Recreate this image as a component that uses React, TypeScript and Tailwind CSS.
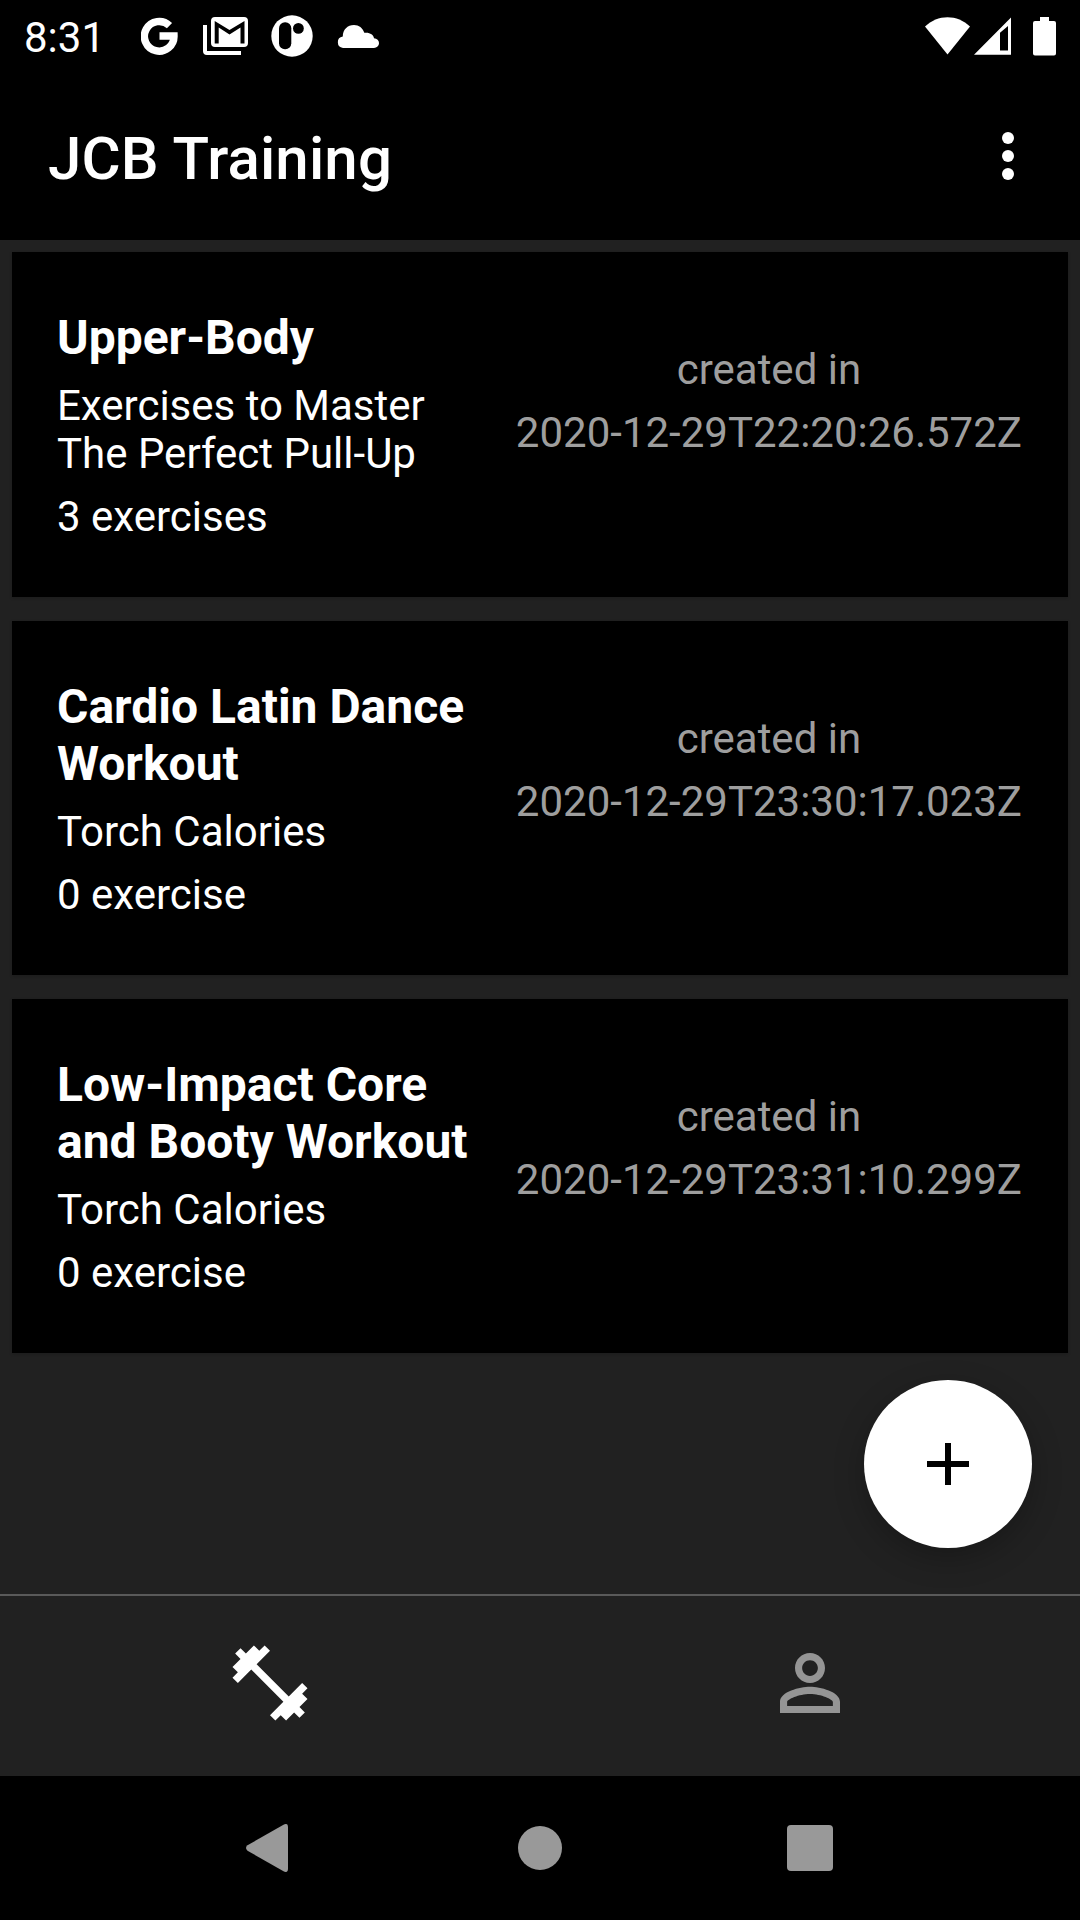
interface Workout {
  id: number;
  title: string;
  description: string;
  exercises: number;
  createdAt: string;
}

const workouts: Workout[] = [
  { id: 1, title: 'Upper-Body', description: 'Exercises to Master The Perfect Pull-Up', exercises: 3, createdAt: '2020-12-29T22:20:26.572Z' },
  { id: 2, title: 'Cardio Latin Dance Workout', description: 'Torch Calories', exercises: 0, createdAt: '2020-12-29T23:30:17.023Z' },
  { id: 3, title: 'Low-Impact Core and Booty Workout', description: 'Torch Calories', exercises: 0, createdAt: '2020-12-29T23:31:10.299Z' },
];

function StatusBar() {
  return (
    <div className="flex h-[72px] items-center justify-between px-6">
      <div className="flex items-center">
        <span className="w-[117px] pt-[3px] text-[42px] leading-[69px]">8:31</span>
        <svg className="h-[38px] w-[37px]" viewBox="0 0 37 38">
          <path d="M28.5 8.700A14.800 14.800 0 1 0 33 19H18.500" fill="none" stroke="white" strokeWidth="7.400" />
        </svg>
        <svg className="ml-[25px] h-[38px] w-[45px]" viewBox="0 0 45 38">
          <path d="M0 8h4v26h34v4H4a4 4 0 0 1-4-4z" fill="white" />
          <path
            fillRule="evenodd"
            fill="white"
            d="M12 0h29a4 4 0 0 1 4 4v22a4 4 0 0 1-4 4H12a4 4 0 0 1-4-4V4a4 4 0 0 1 4-4zM11.700 4v22.500h4V10.500L26.500 17.500 37.500 10.500V26.500h4V4L26.500 13z"
          />
        </svg>
        <svg className="ml-[23px] h-[42px] w-[42px]" viewBox="0 0 42 42">
          <circle cx="21" cy="21" r="20.700" fill="white" />
          <rect x="8" y="7.300" width="12.300" height="27" rx="6" fill="black" />
          <circle cx="27.400" cy="13.400" r="5.400" fill="black" />
        </svg>
        <svg className="ml-6 h-[23px] w-[42px]" viewBox="0 0 42 23">
          <path d="M6 23a5.800 5.800 0 0 1-.2-11.500C5.800 4.500 10.500 0 17 0c5 0 8.700 3 10.300 7.800 5-.8 9.200 1.600 9.700 5.400 3 .3 5 2.200 5 4.900 0 2.800-2.200 4.900-5 4.900z" fill="white" />
        </svg>
      </div>
      <div className="flex items-center">
        <svg className="h-[38px] w-[45px]" viewBox="0 0 45 38">
          <path d="M0 9.500C12.500-3 32.500-3 45 9.500L22.500 37.500z" fill="white" />
        </svg>
        <svg className="ml-1 h-[38px] w-[37px]" viewBox="0 0 37 38">
          <path fillRule="evenodd" d="M0 37.700L37 .5v37.200zM26 15.700V33.500h8V9z" fill="white" />
        </svg>
        <svg className="ml-[22px] h-[39px] w-[23px]" viewBox="0 0 23 39">
          <path d="M7 0h9v4h5a2 2 0 0 1 2 2v30.500a2 2 0 0 1-2 2H2a2 2 0 0 1-2-2V6a2 2 0 0 1 2-2h5z" fill="white" />
        </svg>
      </div>
    </div>
  );
}

function Header() {
  return (
    <header className="flex h-[168px] items-center justify-between pl-12 pr-9 pb-[3px]">
      <h1 className="pt-2 text-[60px] font-medium leading-[70px] tracking-[0.15px]">JCB Training</h1>
      <svg className="h-[72px] w-[72px]" viewBox="0 0 24 24" fill="white">
        <circle cx="12" cy="6.300" r="2" />
        <circle cx="12" cy="12.300" r="2" />
        <circle cx="12" cy="18.300" r="2" />
      </svg>
    </header>
  );
}

function WorkoutCard({ workout }: { workout: Workout }) {
  return (
    <div className="flex justify-between bg-black pb-14 pl-[45px] pr-[46px] pt-[57px] shadow-[0_1px_3px_rgba(0,0,0,0.2)]">
      <div className="flex w-[425px] flex-col gap-[15px] text-[42px] leading-[48px]">
        <h2 className="mb-px text-[48px] font-bold leading-[57px]">{workout.title}</h2>
        <p>{workout.description}</p>
        <p>
          {workout.exercises} {workout.exercises > 1 ? 'exercises' : 'exercise'}
        </p>
      </div>
      <div className="flex flex-col items-center gap-[15px] whitespace-nowrap pt-[37px] text-[42px] leading-[48px] text-[#9e9e9e]">
        <p>created in</p>
        <p>{workout.createdAt}</p>
      </div>
    </div>
  );
}

function TabBar() {
  return (
    <nav className="grid h-[182px] grid-cols-2 place-items-center border-t-2 border-[#5a5a5a] bg-[#212121] pb-[7px]">
      <svg className="h-[90px] w-[90px]" viewBox="0 0 24 24" fill="white">
        <path d="M20.570 14.860L22 13.430 20.570 12 17 15.570 8.430 7 12 3.430 10.570 2 9.140 3.430 7.710 2 5.570 4.140 4.140 2.710 2.710 4.140 4.140 5.570 2 7.710 3.430 9.140 2 10.570 3.430 12 7 8.430 15.570 17 12 20.570 13.430 22 14.860 20.570 16.290 22 18.430 19.860 19.860 21.290 21.290 19.860 19.860 18.430 22 16.290z" />
      </svg>
      <svg className="h-[90px] w-[90px]" viewBox="0 0 24 24" fill="#959595">
        <path d="M12 5.900c1.160 0 2.100.94 2.100 2.100s-.94 2.100-2.100 2.100S9.900 9.160 9.900 8s.94-2.100 2.100-2.100m0 9c2.970 0 6.100 1.460 6.100 2.100v1.100H5.900V17c0-.64 3.130-2.100 6.100-2.100M12 4C9.790 4 8 5.790 8 8s1.790 4 4 4 4-1.790 4-4-1.790-4-4-4zm0 9c-2.670 0-8 1.340-8 4v3h16v-3c0-2.660-5.330-4-8-4z" />
      </svg>
    </nav>
  );
}

function SystemNav() {
  return (
    <div className="flex h-36 items-center bg-black pl-[246px]">
      <svg className="h-12 w-[42px]" viewBox="0 0 42 48" fill="#999">
        <path d="M1.500 21.300L37.500.7Q42-1.500 42 3v42q0 4.500-4.500 2.300L1.500 26.700Q-1.500 24 1.500 21.300z" />
      </svg>
      <div className="ml-[230px] h-11 w-11 rounded-full bg-[#999]" />
      <div className="ml-[225px] h-[46px] w-[46px] rounded-[4px] bg-[#999]" />
    </div>
  );
}

export default function App() {
  return (
    <div className="flex h-[1920px] w-[1080px] flex-col overflow-hidden bg-black font-['Roboto',sans-serif] text-white">
      <StatusBar />
      <Header />
      <main className="relative flex flex-1 flex-col gap-6 bg-[#212121] p-3">
        {workouts.map((workout) => (
          <WorkoutCard key={workout.id} workout={workout} />
        ))}
        <button className="absolute bottom-[46px] right-12 flex h-[168px] w-[168px] items-center justify-center rounded-full bg-white shadow-[0_10px_30px_rgba(0,0,0,0.25)]">
          <svg className="h-[72px] w-[72px]" viewBox="0 0 24 24" fill="black">
            <path d="M19 13h-6v6h-2v-6H5v-2h6V5h2v6h6z" />
          </svg>
        </button>
      </main>
      <TabBar />
      <SystemNav />
    </div>
  );
}
